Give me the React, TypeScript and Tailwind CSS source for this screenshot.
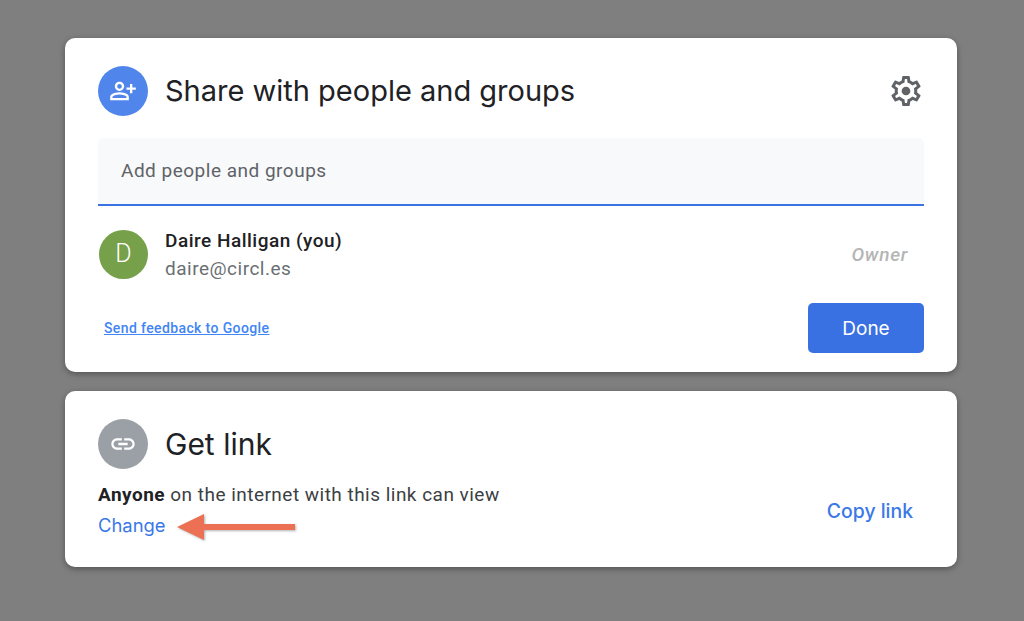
import { MdOutlinePersonAddAlt, MdLink } from "react-icons/md";

const roboto = "[font-family:Roboto,sans-serif]";
const title = "[font-family:Inter,sans-serif]";

export default function App() {
  return (
    <div className={`w-[1024px] h-[621px] bg-[#7f7f7f] pt-[38px] pl-[65px] pr-[67px] flex flex-col gap-[19px] overflow-hidden ${roboto}`}>
      <section className="h-[334px] bg-white rounded-[10px] shadow-[0_2px_6px_rgba(0,0,0,0.35)] pt-[28px] px-[33px] flex flex-col">
        <div className="flex items-center h-[50px]">
          <div className="w-[50px] h-[50px] rounded-full bg-[#5086ec] flex items-center justify-center text-white">
            <MdOutlinePersonAddAlt size={28} />
          </div>
          <h1 className={`ml-[17px] text-[29px] text-[#202124] ${title}`}>Share with people and groups</h1>
          <svg width="36" height="36" viewBox="0 0 24 24" fill="#5f6368" className="ml-auto">
            <path d="M19.43 12.98c.04-.32.07-.64.07-.98 0-.34-.03-.66-.07-.98l2.11-1.65c.19-.15.24-.42.12-.64l-2-3.46c-.09-.16-.26-.25-.44-.25-.06 0-.12.01-.17.03l-2.49 1c-.52-.4-1.08-.73-1.69-.98l-.38-2.65C14.46 2.18 14.25 2 14 2h-4c-.25 0-.46.18-.49.42l-.38 2.65c-.61.25-1.17.59-1.69.98l-2.49-1c-.06-.02-.12-.03-.18-.03-.17 0-.34.09-.43.25l-2 3.46c-.13.22-.07.49.12.64l2.11 1.65c-.04.32-.07.65-.07.98 0 .33.03.66.07.98l-2.11 1.65c-.19.15-.24.42-.12.64l2 3.46c.09.16.26.25.44.25.06 0 .12-.01.17-.03l2.49-1c.52.4 1.08.73 1.69.98l.38 2.65c.03.24.24.42.49.42h4c.25 0 .46-.18.49-.42l.38-2.65c.61-.25 1.17-.59 1.69-.98l2.49 1c.06.02.12.03.18.03.17 0 .34-.09.43-.25l2-3.46c.12-.22.07-.49-.12-.64l-2.11-1.65zm-1.98-1.71c.04.31.05.52.05.73 0 .21-.02.43-.05.73l-.14 1.13.89.7 1.08.84-.7 1.21-1.27-.51-1.04-.42-.9.68c-.43.32-.84.56-1.25.73l-1.06.43-.16 1.13-.2 1.35h-1.4l-.19-1.35-.16-1.13-1.06-.43c-.43-.18-.83-.41-1.23-.71l-.91-.7-1.06.43-1.27.51-.7-1.21 1.08-.84.89-.7-.14-1.13c-.03-.31-.05-.54-.05-.74s.02-.43.05-.73l.14-1.13-.89-.7-1.08-.84.7-1.21 1.27.51 1.04.42.9-.68c.43-.32.84-.56 1.25-.73l1.06-.43.16-1.13.2-1.35h1.39l.19 1.35.16 1.13 1.06.43c.43.18.83.41 1.23.71l.91.7 1.06-.43 1.27-.51.7 1.21-1.07.85-.89.7.14 1.13z" />
            <circle cx="12" cy="12" r="2.9" />
          </svg>
        </div>
        <div className="mt-[22px] h-[68px] bg-[#f8f9fa] rounded-t-[6px] border-b-2 border-[#3b73e4] flex items-center pl-[23px] text-[19px] tracking-[0.5px] text-[#5f6368]">
          Add people and groups
        </div>
        <div className="mt-[23px] flex items-center h-[50px]">
          <div className="ml-px w-[49px] h-[49px] rounded-full bg-[#76a04a] flex items-center justify-center text-white text-[25px] font-light">D</div>
          <div className="ml-[17px] pt-[2px] flex flex-col">
            <span className="text-[19px] tracking-[0.5px] leading-[28px] font-medium text-[#202124]">Daire Halligan (you)</span>
            <span className="text-[19px] tracking-[0.5px] leading-[28px] text-[#6b6f73]">daire@circl.es</span>
          </div>
          <span className="ml-auto mr-[16px] pt-[2px] text-[19px] tracking-[0.7px] italic font-medium text-[#b5b5b5]">Owner</span>
        </div>
        <div className="mt-[24px] flex items-center justify-between">
          <a className="ml-[6px] text-[14px] tracking-[0.38px] font-medium text-[#4285f4] underline">Send feedback to Google</a>
          <button className={`w-[116px] h-[50px] pt-[2px] bg-[#3a71e2] rounded-[5px] text-white text-[19px] ${title}`}>Done</button>
        </div>
      </section>
      <section className="relative h-[176px] bg-white rounded-[10px] shadow-[0_2px_6px_rgba(0,0,0,0.35)] pt-[28px] px-[33px] flex flex-col">
        <div className="flex items-center h-[50px]">
          <div className="w-[50px] h-[50px] rounded-full bg-[#9aa0a6] flex items-center justify-center text-white">
            <MdLink size={28} />
          </div>
          <h2 className={`ml-[17px] text-[30px] text-[#202124] ${title}`}>Get link</h2>
        </div>
        <div className="flex items-center justify-between mt-[10px]">
          <div className="flex flex-col">
            <p className="text-[19px] tracking-[0.48px] leading-[32px] text-[#3c4043]"><b className="font-bold text-[#202124]">Anyone</b> on the internet with this link can view</p>
            <a className={`text-[18.4px] leading-[28px] text-[#3b78e7] ${title}`}>Change</a>
          </div>
          <a className={`mr-[11px] mt-[6px] text-[19.4px] font-medium text-[#3b78e7] ${title}`}>Copy link</a>
        </div>
        <svg className="absolute left-[110px] top-[121px] drop-shadow-[1px_1px_1px_rgba(0,0,0,0.3)]" width="124" height="32" viewBox="0 0 124 32">
          <path d="M2 15 L29 2 V12 H120 V18 H29 V28 Z" fill="#ec7054" />
        </svg>
      </section>
    </div>
  );
}
